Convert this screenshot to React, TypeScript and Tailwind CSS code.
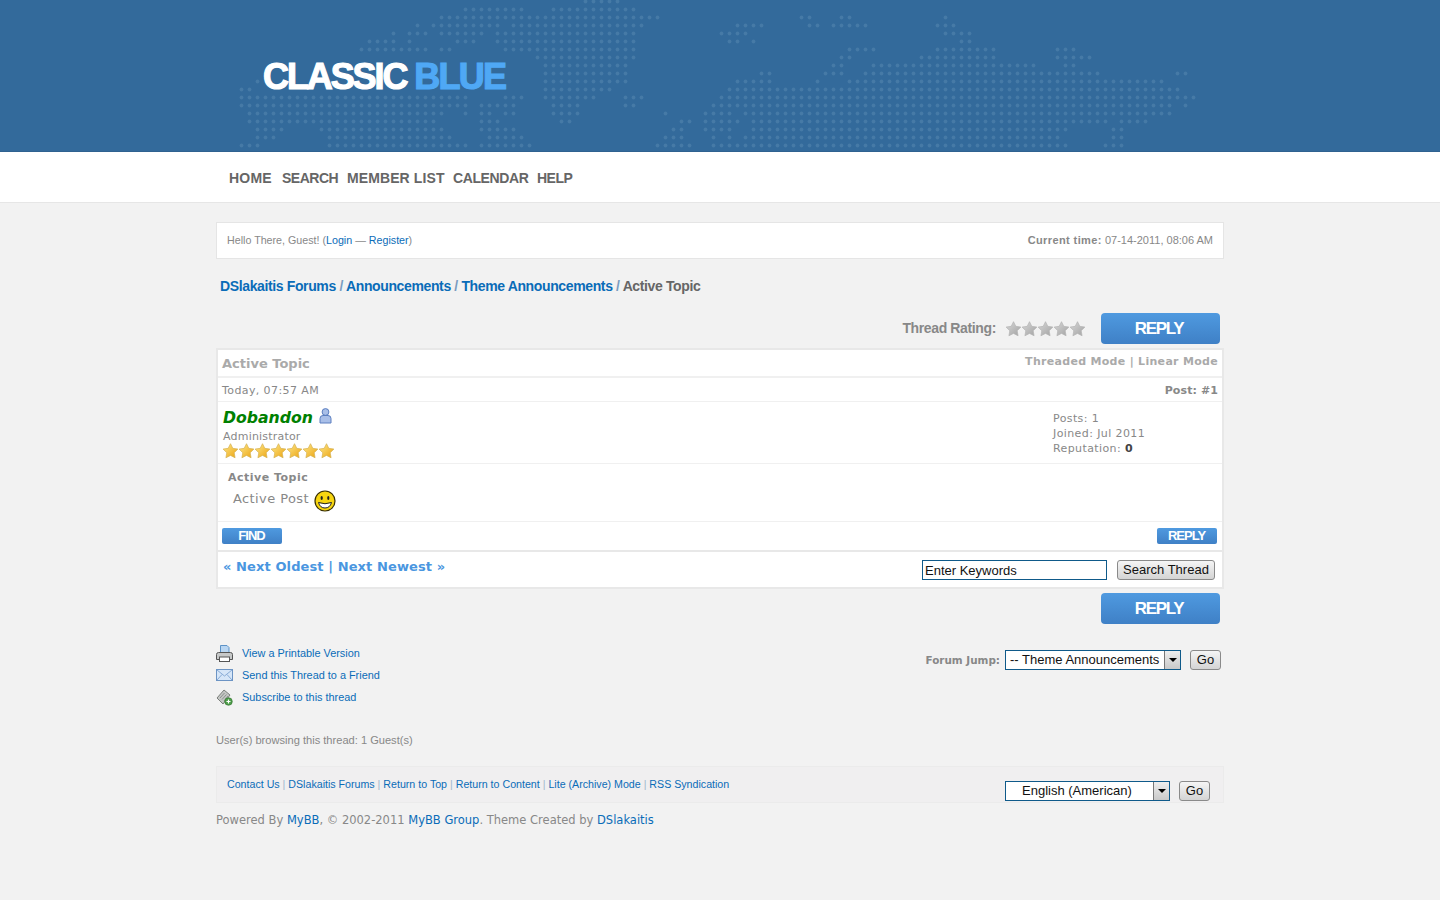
import React from "react";

// runs of map dots per row: [first column, last column]
const MAP_ROWS: number[][][] = [
  [[43, 47]],
  [[28, 35], [39, 49]],
  [[25, 52], [70, 71], [75, 76], [88, 88]],
  [[22, 22], [24, 32], [34, 50], [62, 65], [71, 72], [74, 78], [87, 89]],
  [[19, 19], [21, 23], [25, 30], [32, 49], [60, 63], [88, 91]],
  [[16, 19], [21, 21], [27, 29], [32, 49], [61, 62], [64, 64], [90, 91]],
  [[15, 23], [25, 26], [33, 49], [76, 79], [87, 94], [102, 104]],
  [[37, 49], [75, 76], [85, 94], [102, 106]],
  [[38, 48], [74, 75], [79, 99], [103, 104]],
  [[38, 48], [65, 66], [73, 75], [78, 107], [117, 118]],
  [[2, 2], [38, 48], [62, 66], [72, 72], [76, 115]],
  [[0, 1], [38, 46], [61, 117]],
  [[0, 28], [33, 35], [38, 44], [48, 50], [60, 119]],
  [[0, 28], [30, 34], [39, 42], [48, 49], [59, 116], [118, 118]],
  [[1, 25], [28, 28], [30, 31], [33, 34], [39, 42], [53, 53], [58, 61], [63, 116]],
  [[1, 24], [30, 32], [40, 41], [55, 56], [58, 62], [64, 108], [110, 113]],
  [[2, 5], [10, 25], [30, 34], [54, 55], [58, 61], [64, 103], [109, 110]],
  [[2, 4], [11, 26], [31, 35], [53, 55], [59, 59], [61, 61], [63, 102], [109, 110]],
  [[0, 2], [11, 28], [30, 36], [52, 56], [59, 103], [108, 110]],
];

function WorldMap() {
  const dots: React.ReactNode[] = [];
  MAP_ROWS.forEach((runs, r) => {
    runs.forEach(([from, to]) => {
      for (let k = from; k <= to; k++) {
        dots.push(<circle key={`${r}-${k}`} cx={241.5 + 8 * k} cy={1.5 + 8 * r} r={1.9} />);
      }
    });
  });
  return (
    <svg className="absolute left-0 top-0" width="1440" height="152" fill="#467aa6">
      {dots}
    </svg>
  );
}

const STAR =
  "M7.5 0.2 L9.79 4.84 L14.92 5.59 L11.21 9.21 L12.08 14.31 L7.5 11.9 L2.92 14.31 L3.79 9.21 L0.08 5.59 L5.21 4.84 Z";

function Stars({ count, id, from, to, line }: { count: number; id: string; from: string; to: string; line: string }) {
  return (
    <svg width={count * 16 + 1} height="16" viewBox={`0 0 ${count * 16 + 1} 16`}>
      <defs>
        <linearGradient id={id} x1="0" y1="0" x2="1" y2="1">
          <stop offset="0" stopColor={from} />
          <stop offset="1" stopColor={to} />
        </linearGradient>
      </defs>
      {Array.from({ length: count }).map((_, i) => (
        <path key={i} d={STAR} transform={`translate(${i * 16} 0.5)`} fill={`url(#${id})`} stroke={line} strokeWidth="0.7" />
      ))}
    </svg>
  );
}

function Smiley() {
  return (
    <svg width="22" height="22" viewBox="0 0 22 22">
      <circle cx="11" cy="11" r="10" fill="#f7d510" stroke="#3a3000" strokeWidth="1.2" />
      <ellipse cx="7.7" cy="8" rx="1.1" ry="1.9" fill="#222" />
      <ellipse cx="14.3" cy="8" rx="1.1" ry="1.9" fill="#222" />
      <path d="M4.5 12.5 Q11 15 17.5 12.5 Q16 18 11 18 Q6 18 4.5 12.5 Z" fill="#fff" stroke="#222" strokeWidth="1" />
    </svg>
  );
}

function UserIcon() {
  return (
    <svg width="13" height="16" viewBox="0 0 13 16">
      <circle cx="6.5" cy="4" r="3.4" fill="#a9bfe8" stroke="#5c7fc0" />
      <path d="M1 15 V10.5 Q1 7.5 4 7.5 H9 Q12 7.5 12 10.5 V15 Z" fill="#a9bfe8" stroke="#5c7fc0" />
    </svg>
  );
}

function PrinterIcon() {
  return (
    <svg width="17" height="17" viewBox="0 0 17 17">
      <path d="M4.5 0.5 H11 L13 2.5 V8 H4.5 Z" fill="#b9d6f2" stroke="#5d93c7" />
      <path d="M0.5 9.5 Q0.5 7.5 2.5 7.5 H14.5 Q16.5 7.5 16.5 9.5 V14.5 H0.5 Z" fill="#c6c8c8" stroke="#555" />
      <rect x="3.5" y="12" width="10" height="4.5" fill="#fff" stroke="#555" />
    </svg>
  );
}

function MailIcon() {
  return (
    <svg width="17" height="12" viewBox="0 0 17 12">
      <rect x="0.5" y="0.5" width="16" height="11" fill="#d6e6f8" stroke="#6c94c4" />
      <path d="M1 1 L8.5 7 L16 1 M1 11 L6 5.5 M16 11 L11 5.5" fill="none" stroke="#88abd6" />
    </svg>
  );
}

function SubscribeIcon() {
  return (
    <svg width="17" height="17" viewBox="0 0 17 17">
      <path d="M1 9 L8 1 L14 6 L7 15 Z" fill="#c3c5c3" stroke="#7b7f7b" />
      <path d="M4 9 L8.5 4 M6 10.5 L10.5 5.5 M8 12 L12 7" stroke="#8d918d" />
      <circle cx="12.5" cy="12.5" r="3.8" fill="#4e9e4a" stroke="#2f6f2c" strokeWidth="0.6" />
      <path d="M10.5 12.5 H14.5 M12.5 10.5 V14.5" stroke="#fff" strokeWidth="1.2" />
    </svg>
  );
}

function ReplyButton() {
  return (
    <a className="flex h-[31px] w-[119px] items-center justify-center rounded-[4px] bg-gradient-to-b from-[#4f9ae0] to-[#3f80c6] pr-[3px] font-['Liberation_Sans',sans-serif] text-[17px] font-bold tracking-[-1.3px] text-white">
      REPLY
    </a>
  );
}

function SmallButton({ label, width }: { label: string; width: string }) {
  return (
    <a className={`flex h-4 items-center justify-center rounded-[2px] bg-gradient-to-b from-[#4f9ae0] to-[#3f80c6] pr-[1px] font-['Liberation_Sans',sans-serif] text-[13px] font-bold tracking-[-1px] text-white ${width}`}>
      {label}
    </a>
  );
}

function GreyButton({ label, width, height }: { label: string; width: string; height: string }) {
  return (
    <button className={`flex items-center justify-center rounded-[3px] border border-[#8a8a8a] bg-gradient-to-b from-[#f5f5f5] to-[#d4d4d4] font-['Liberation_Sans',sans-serif] text-[13px] text-[#111] ${width} ${height}`}>
      {label}
    </button>
  );
}

function FakeSelect({ label, width, center }: { label: string; width: string; center?: boolean }) {
  return (
    <div className={`flex h-5 items-center whitespace-nowrap border border-[#0f5a8a] bg-white font-['Liberation_Sans',sans-serif] text-[13px] text-[#111] ${width}`}>
      <span className={center ? "flex-1 pl-4" : "flex-1 pl-1"}>{label}</span>
      <span className="flex h-full w-4 items-center justify-center border-l border-[#777] bg-gradient-to-b from-[#eee] to-[#c9c9c9]">
        <span className="h-0 w-0 border-x-4 border-t-4 border-x-transparent border-t-black" />
      </span>
    </div>
  );
}

const link = "text-[#0a6cb8]";

export default function App() {
  return (
    <div className="min-h-[900px] bg-[#f2f2f2] font-['Liberation_Sans',sans-serif] text-[#888]">
      <div className="relative h-[152px] overflow-hidden border-b border-[#2f6290] bg-[#336a9b]">
        <WorldMap />
        <div className="relative pl-[263px] pt-[54px] text-[36px] font-bold leading-[46px] tracking-[-2.1px] [-webkit-text-stroke:1.2px_currentColor]">
          <span className="text-white">CLASSIC</span>
          <span className="ml-[8px] tracking-[-1.8px] text-[#4fa8f5]">BLUE</span>
        </div>
      </div>

      <div className="flex h-[51px] items-center border-b border-[#e6e6e6] bg-white pl-[229px] pt-[2px] text-[14px] font-bold text-[#666]">
        <a className="w-[53px] tracking-[0.2px]">HOME</a>
        <a className="w-[65px] tracking-[-0.5px]">SEARCH</a>
        <a className="w-[106px] tracking-[0.1px]">MEMBER LIST</a>
        <a className="w-[84px] tracking-[-0.4px]">CALENDAR</a>
        <a className="tracking-[-0.5px]">HELP</a>
      </div>

      <div className="mx-auto w-[1008px]">
        <div className="mt-[19px] flex h-[37px] items-center justify-between border border-[#e5e5e5] bg-white px-[10px] text-[10.7px]">
          <span>
            Hello There, Guest! (<a className={link}>Login</a> — <a className={link}>Register</a>)
          </span>
          <span className="text-[11px]">
            <b className="tracking-[0.4px]">Current time:</b> 07-14-2011, 08:06 AM
          </span>
        </div>

        <div className="mt-[18px] pl-1 text-[14px] font-bold leading-[18px] tracking-[-0.37px] text-[#666]">
          <a className={link}>DSlakaitis Forums</a> <span className="text-[#7a9cc0]">/</span>{" "}
          <a className={link}>Announcements</a> <span className="text-[#7a9cc0]">/</span>{" "}
          <a className={link}>Theme Announcements</a> <span className="text-[#7a9cc0]">/</span> Active Topic
        </div>

        <div className="mt-[18px] flex h-[31px] items-center justify-end pr-1">
          <span className="text-[14px] font-bold tracking-[-0.37px] text-[#888]">Thread Rating:</span>
          <span className="ml-[10px] mr-[14px] flex">
            <Stars count={5} id="grey" from="#d8d8d8" to="#a2a2a2" line="#b5b5b5" />
          </span>
          <ReplyButton />
        </div>

        <div className="mt-1 border-2 border-[#e8e8e8] bg-white font-['DejaVu_Sans',sans-serif]">
          <div className="box-content flex h-[26px] items-center justify-between border-b-2 border-[#f0f0f0] px-1">
            <span className="pt-[1px] text-[13px] font-bold text-[#aaa]">Active Topic</span>
            <span className="-mt-[1px] text-[11px] font-bold tracking-[0.3px] text-[#aaa]">Threaded Mode | Linear Mode</span>
          </div>
          <div className="flex h-[24px] items-center justify-between border-b border-[#f0f0f0] px-1 pt-1 text-[11px]">
            <span className="tracking-[0.4px]">Today, 07:57 AM</span>
            <b className="tracking-[0.1px]">Post: #1</b>
          </div>
          <div className="flex h-[62px] justify-between border-b border-[#f0f0f0] pl-[5px]">
            <div className="pt-[2px]">
              <div className="flex h-[24px] items-center pt-1">
                <a className="text-[15.7px] font-bold italic text-[#008000]">Dobandon</a>
                <span className="-mt-[5px] ml-[6px]">
                  <UserIcon />
                </span>
              </div>
              <div className="pt-[1px] text-[11px] leading-[16px] tracking-[0.2px]">Administrator</div>
              <div className="-mt-[2px]">
                <Stars count={7} id="gold" from="#ffe98a" to="#eba20f" line="#d5b252" />
              </div>
            </div>
            <div className="w-[169px] pt-[9px] text-[11px] leading-[15px] tracking-[0.4px]">
              <div>Posts: 1</div>
              <div>Joined: Jul 2011</div>
              <div>
                Reputation: <b className="text-[#444]">0</b>
              </div>
            </div>
          </div>
          <div className="h-[58px] border-b border-[#f0f0f0] pl-[10px] pt-[6px]">
            <div className="text-[11px] font-bold leading-[16px] tracking-[0.5px]">Active Topic</div>
            <div className="mt-1 flex items-center pl-[5px] text-[13px]">
              <span className="-mt-[4px] tracking-[0.4px]">Active Post</span>
              <span className="ml-[5px]">
                <Smiley />
              </span>
            </div>
          </div>
          <div className="box-content flex h-[28px] items-center justify-between border-b-2 border-[#e8e8e8] pl-1 pr-[5px]">
            <SmallButton label="FIND" width="w-[60px]" />
            <SmallButton label="REPLY" width="w-[60px]" />
          </div>
          <div className="flex h-[35px] items-start justify-between pl-[5px] pr-[7px]">
            <span className="mt-[5px] text-[13px] font-bold tracking-[0.1px] text-[#4a96e0]">« Next Oldest | Next Newest »</span>
            <div className="mt-2 flex items-center gap-[10px]">
              <input
                readOnly
                value="Enter Keywords"
                className="h-5 w-[185px] border border-[#0f5a8a] bg-white pl-[2px] font-['Liberation_Sans',sans-serif] text-[13px] text-[#111] outline-none"
              />
              <GreyButton label="Search Thread" width="w-[98px]" height="h-5" />
            </div>
          </div>
        </div>

        <div className="mt-1 flex justify-end pr-1">
          <ReplyButton />
        </div>

        <div className="mt-[18px] flex justify-between">
          <div className="flex flex-col text-[10.9px] leading-[16px] text-[#0a6cb8]">
            <div className="flex h-[22px] items-center gap-[9px]">
              <PrinterIcon />
              <a>View a Printable Version</a>
            </div>
            <div className="flex h-[22px] items-center gap-[9px]">
              <span className="flex w-[17px] justify-center">
                <MailIcon />
              </span>
              <a>Send this Thread to a Friend</a>
            </div>
            <div className="flex h-[22px] items-center gap-[9px]">
              <SubscribeIcon />
              <a>Subscribe to this thread</a>
            </div>
          </div>
          <div className="mr-[3px] mt-2 flex h-[20px] items-center">
            <span className="mr-[5px] pt-[1px] font-['DejaVu_Sans',sans-serif] text-[10.4px] font-bold">Forum Jump:</span>
            <FakeSelect label="-- Theme Announcements" width="w-[176px]" />
            <span className="ml-[9px]">
              <GreyButton label="Go" width="w-[31px]" height="h-[20px]" />
            </span>
          </div>
        </div>

        <div className="mt-6 text-[11.1px] leading-[16px]">User(s) browsing this thread: 1 Guest(s)</div>

        <div className="mt-[18px] flex h-[37px] justify-between border border-[#ebebeb] bg-[#f0eff0] pl-[10px] pr-[13px]">
          <div className="flex items-center text-[10.65px] text-[#a0b8cc]">
            <a className={link}>Contact Us</a>&nbsp;|&nbsp;<a className={link}>DSlakaitis Forums</a>&nbsp;|&nbsp;
            <a className={link}>Return to Top</a>&nbsp;|&nbsp;<a className={link}>Return to Content</a>&nbsp;|&nbsp;
            <a className={link}>Lite (Archive) Mode</a>&nbsp;|&nbsp;<a className={link}>RSS Syndication</a>
          </div>
          <div className="flex items-start gap-[9px] pt-[14px]">
            <FakeSelect label="English (American)" width="w-[165px]" center />
            <GreyButton label="Go" width="w-[31px]" height="h-[20px]" />
          </div>
        </div>

        <div className="mt-[9px] font-['DejaVu_Sans',sans-serif] text-[11.5px] leading-[16px]">
          Powered By <a className={link}>MyBB</a>, © 2002-2011 <a className={link}>MyBB Group</a>. Theme Created by{" "}
          <a className={link}>DSlakaitis</a>
        </div>
      </div>
    </div>
  );
}
